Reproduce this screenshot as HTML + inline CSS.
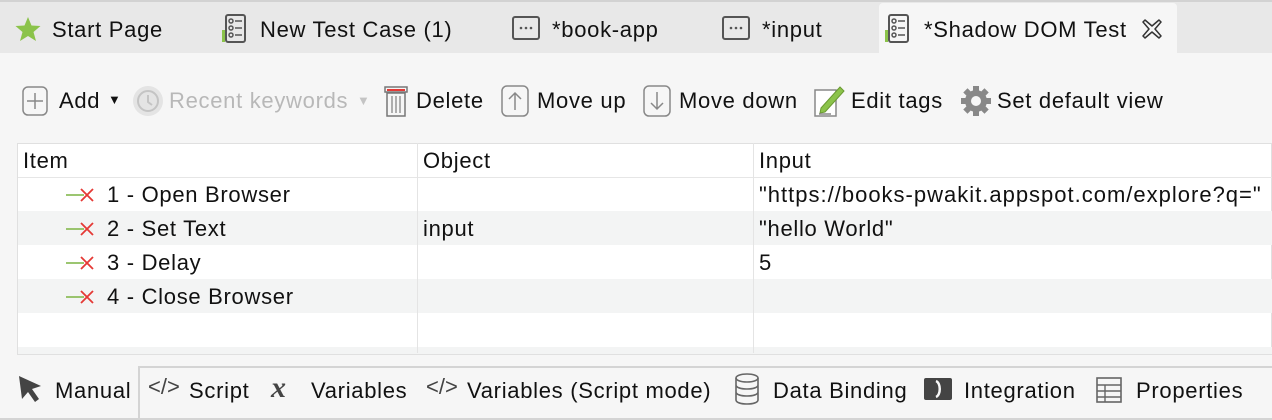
<!DOCTYPE html>
<html><head><style>
*{margin:0;padding:0;box-sizing:border-box}
body{width:1272px;height:420px;overflow:hidden;background:#f6f6f6;font-family:"Liberation Sans",sans-serif;font-size:22px;letter-spacing:0.7px;color:#111;position:relative}
.abs{position:absolute;white-space:nowrap}
svg{position:absolute}
.tabs{position:absolute;left:0;top:0;width:1272px;height:53px;background:#e8e8e8;border-top:2px solid #d2d2d2}
.row{position:absolute;left:18px;width:1254px;height:34px}
.vl{position:absolute;top:143px;width:1px;height:210px;background:#e4e4e4}
</style></head><body>
<div class="tabs"></div>
<div class="abs" style="left:879px;top:3px;width:298px;height:50px;background:#f6f6f6;border-radius:4px 4px 0 0"></div>
<svg style="left:14px;top:16px" width="28" height="26" viewBox="0 0 28 26"><polygon points="14,1 17.5,9.5 26.5,10 19.5,16 22,25 14,20 6,25 8.5,16 1.5,10 10.5,9.5" fill="#8bc34a"/></svg>
<div class="abs" style="left:52px;top:17px">Start Page</div>
<svg style="left:221px;top:14px" width="28" height="30" viewBox="0 0 28 30"><rect x="5" y="1" width="19" height="27" rx="2" fill="none" stroke="#555" stroke-width="2"/><rect x="1" y="16" width="3" height="12" fill="#8bc34a"/><circle cx="10" cy="7" r="2" fill="none" stroke="#555" stroke-width="1.5"/><circle cx="10" cy="14" r="2" fill="none" stroke="#555" stroke-width="1.5"/><circle cx="10" cy="21" r="2" fill="none" stroke="#555" stroke-width="1.5"/><path d="M14 7h7M14 14h7M14 21h7" stroke="#555" stroke-width="1.5"/></svg>
<div class="abs" style="left:260px;top:17px">New Test Case (1)</div>
<svg style="left:512px;top:16px" width="28" height="24" viewBox="0 0 28 24"><rect x="1" y="1" width="26" height="22" rx="2" fill="none" stroke="#555" stroke-width="2"/><circle cx="9" cy="12" r="1.3" fill="#555"/><circle cx="14" cy="12" r="1.3" fill="#555"/><circle cx="19" cy="12" r="1.3" fill="#555"/></svg>
<div class="abs" style="left:552px;top:17px">*book-app</div>
<svg style="left:722px;top:16px" width="28" height="24" viewBox="0 0 28 24"><rect x="1" y="1" width="26" height="22" rx="2" fill="none" stroke="#555" stroke-width="2"/><circle cx="9" cy="12" r="1.3" fill="#555"/><circle cx="14" cy="12" r="1.3" fill="#555"/><circle cx="19" cy="12" r="1.3" fill="#555"/></svg>
<div class="abs" style="left:762px;top:17px">*input</div>
<svg style="left:884px;top:14px" width="28" height="30" viewBox="0 0 28 30"><rect x="5" y="1" width="19" height="27" rx="2" fill="none" stroke="#555" stroke-width="2"/><rect x="1" y="16" width="3" height="12" fill="#8bc34a"/><circle cx="10" cy="7" r="2" fill="none" stroke="#555" stroke-width="1.5"/><circle cx="10" cy="14" r="2" fill="none" stroke="#555" stroke-width="1.5"/><circle cx="10" cy="21" r="2" fill="none" stroke="#555" stroke-width="1.5"/><path d="M14 7h7M14 14h7M14 21h7" stroke="#555" stroke-width="1.5"/></svg>
<div class="abs" style="left:924px;top:17px">*Shadow DOM Test</div>
<svg style="left:1142px;top:19px" width="20" height="20" viewBox="0 0 20 20"><path d="M3 1L10 7 17 1 19 3 13 10 19 17 17 19 10 13 3 19 1 17 7 10 1 3Z" fill="none" stroke="#333" stroke-width="1.5" stroke-linejoin="round"/></svg>
<svg style="left:22px;top:86px" width="28" height="30" viewBox="0 0 28 30"><rect x="1" y="1" width="24" height="28" rx="5" fill="none" stroke="#888" stroke-width="1.5"/><path d="M13 7v16M5 15h16" stroke="#888" stroke-width="1.5"/></svg>
<div class="abs" style="left:59px;top:88px">Add</div>
<div class="abs" style="left:108px;top:92px;font-size:13px">▼</div>
<svg style="left:132px;top:85px" width="32" height="32" viewBox="0 0 32 32"><circle cx="16" cy="16" r="15" fill="#e4e4e4"/><circle cx="16" cy="16" r="10" fill="none" stroke="#c4c4c4" stroke-width="2"/><path d="M16 10v7l4 3" stroke="#c4c4c4" stroke-width="2" fill="none"/></svg>
<div class="abs" style="left:169px;top:88px;color:#b8b8b8">Recent keywords</div>
<div class="abs" style="left:357px;top:93px;font-size:13px;color:#c4c4c4">▼</div>
<svg style="left:384px;top:84px" width="24" height="34" viewBox="0 0 24 34"><rect x="1" y="3" width="22" height="5" fill="none" stroke="#777" stroke-width="1.5"/><rect x="3" y="5" width="18" height="2" fill="#e53935"/><path d="M3 9h18v23H3z" fill="none" stroke="#777" stroke-width="1.5"/><path d="M8 12v17M12 12v17M16 12v17" stroke="#888" stroke-width="1.3"/></svg>
<div class="abs" style="left:416px;top:88px">Delete</div>
<svg style="left:501px;top:85px" width="28" height="32" viewBox="0 0 28 32"><rect x="1" y="1" width="26" height="30" rx="5" fill="none" stroke="#888" stroke-width="1.5"/><path d="M14 25V8M8 14l6-6 6 6" stroke="#888" stroke-width="1.5" fill="none"/></svg>
<div class="abs" style="left:537px;top:88px">Move up</div>
<svg style="left:643px;top:85px" width="28" height="32" viewBox="0 0 28 32"><rect x="1" y="1" width="26" height="30" rx="5" fill="none" stroke="#888" stroke-width="1.5"/><path d="M14 7v17M8 18l6 6 6-6" stroke="#888" stroke-width="1.5" fill="none"/></svg>
<div class="abs" style="left:679px;top:88px">Move down</div>
<svg style="left:814px;top:84px" width="34" height="34" viewBox="0 0 34 34"><rect x="1" y="6" width="21" height="26" fill="#fff" stroke="#888" stroke-width="1.5"/><path d="M7 24L26 3l4 4-19 21-5 1z" fill="#8bc34a" stroke="#6a9a32" stroke-width="1"/><path d="M5 30h12" stroke="#888" stroke-width="1.5"/></svg>
<div class="abs" style="left:851px;top:88px">Edit tags</div>
<svg style="left:959px;top:84px" width="34" height="34" viewBox="0 0 34 34"><g fill="#888"><circle cx="17" cy="17" r="11"/><g stroke="#888" stroke-width="6"><path d="M17 2v30M2 17h30M6.4 6.4l21.2 21.2M27.6 6.4L6.4 27.6"/></g></g><circle cx="17" cy="17" r="5" fill="#f6f6f6"/></svg>
<div class="abs" style="left:997px;top:88px">Set default view</div>
<div class="abs" style="left:17px;top:143px;width:1255px;height:212px;background:#fff;border:1px solid #e0e0e0"></div>
<div class="row" style="top:177px;height:1px;background:#e6e6e6"></div>
<div class="row" style="top:211px;background:#f3f4f4"></div>
<div class="row" style="top:279px;background:#f3f4f4"></div>
<div class="row" style="top:347px;height:7px;background:#f3f4f4"></div>
<div class="vl" style="left:417px"></div>
<div class="vl" style="left:753px"></div>
<div class="abs" style="left:23px;top:148px">Item</div>
<div class="abs" style="left:423px;top:148px">Object</div>
<div class="abs" style="left:759px;top:148px">Input</div>
<svg style="left:66px;top:186px" width="30" height="18" viewBox="0 0 30 18"><path d="M0 9h18" stroke="#7cb342" stroke-width="1.5"/><path d="M15 3l12 12M27 3L15 15" stroke="#e53935" stroke-width="1.8"/></svg>
<svg style="left:66px;top:220px" width="30" height="18" viewBox="0 0 30 18"><path d="M0 9h18" stroke="#7cb342" stroke-width="1.5"/><path d="M15 3l12 12M27 3L15 15" stroke="#e53935" stroke-width="1.8"/></svg>
<svg style="left:66px;top:254px" width="30" height="18" viewBox="0 0 30 18"><path d="M0 9h18" stroke="#7cb342" stroke-width="1.5"/><path d="M15 3l12 12M27 3L15 15" stroke="#e53935" stroke-width="1.8"/></svg>
<svg style="left:66px;top:288px" width="30" height="18" viewBox="0 0 30 18"><path d="M0 9h18" stroke="#7cb342" stroke-width="1.5"/><path d="M15 3l12 12M27 3L15 15" stroke="#e53935" stroke-width="1.8"/></svg>
<div class="abs" style="left:107px;top:182px">1 - Open Browser</div>
<div class="abs" style="left:107px;top:216px">2 - Set Text</div>
<div class="abs" style="left:107px;top:250px">3 - Delay</div>
<div class="abs" style="left:107px;top:284px">4 - Close Browser</div>
<div class="abs" style="left:423px;top:216px">input</div>
<div class="abs" style="left:759px;top:182px;letter-spacing:1px">"https://books-pwakit.appspot.com/explore?q="</div>
<div class="abs" style="left:759px;top:216px">"hello World"</div>
<div class="abs" style="left:759px;top:250px">5</div>
<div class="abs" style="left:139px;top:366px;width:1133px;height:2px;background:#d4d4d4"></div>
<div class="abs" style="left:0;top:418px;width:1272px;height:2px;background:#d4d4d4"></div>
<div class="abs" style="left:138px;top:366px;width:2px;height:54px;background:#d4d4d4"></div>
<svg style="left:18px;top:375px" width="26" height="30" viewBox="0 0 26 30"><path d="M1 1l22 10-9 3 7 10-4 3-7-10-6 7z" fill="#444"/></svg>
<div class="abs" style="left:55px;top:378px">Manual</div>
<div class="abs" style="left:148px;top:374px;color:#444;letter-spacing:0">&lt;/&gt;</div>
<div class="abs" style="left:189px;top:378px">Script</div>
<div class="abs" style="left:271px;top:371px;font-family:'Liberation Serif',serif;font-style:italic;font-weight:bold;font-size:30px;color:#444">x</div>
<div class="abs" style="left:311px;top:378px">Variables</div>
<div class="abs" style="left:426px;top:374px;color:#444;letter-spacing:0">&lt;/&gt;</div>
<div class="abs" style="left:467px;top:378px">Variables (Script mode)</div>
<svg style="left:734px;top:373px" width="26" height="32" viewBox="0 0 26 32"><g fill="none" stroke="#666" stroke-width="1.6"><ellipse cx="13" cy="5" rx="11" ry="4"/><path d="M2 5v22c0 2.5 5 4 11 4s11-1.5 11-4V5M2 12c0 2.5 5 4 11 4s11-1.5 11-4M2 19c0 2.5 5 4 11 4s11-1.5 11-4"/></g></svg>
<div class="abs" style="left:773px;top:378px">Data Binding</div>
<svg style="left:924px;top:378px" width="28" height="22" viewBox="0 0 28 22"><rect x="0" y="0" width="28" height="22" rx="2" fill="#444"/><path d="M12 3c5 2 5 14 0 16" stroke="#f6f6f6" stroke-width="2.5" fill="none"/></svg>
<div class="abs" style="left:964px;top:378px">Integration</div>
<svg style="left:1096px;top:377px" width="26" height="26" viewBox="0 0 26 26"><rect x="1" y="1" width="24" height="24" fill="none" stroke="#666" stroke-width="1.6"/><path d="M1 8h24M1 14h24M1 20h24M9 8v17" stroke="#666" stroke-width="1.4"/></svg>
<div class="abs" style="left:1136px;top:378px">Properties</div>
</body></html>
